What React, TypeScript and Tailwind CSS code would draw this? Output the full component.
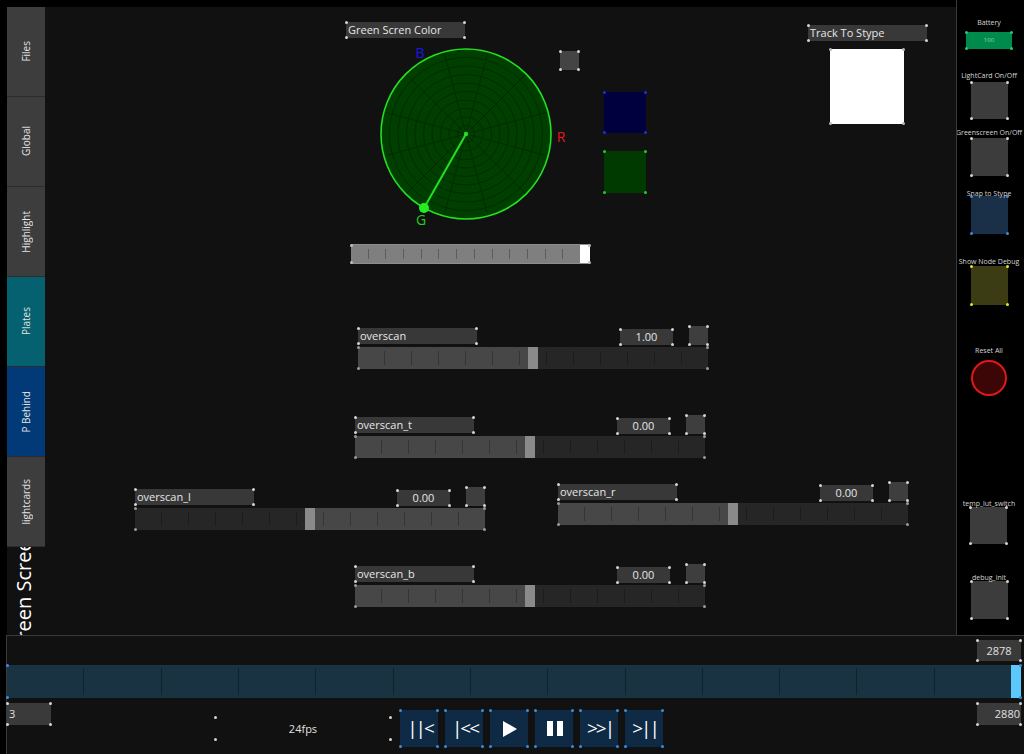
import React from "react";

const FONT = "font-['Open_Sans','DejaVu_Sans',sans-serif]";

/** Tiny corner markers that every control in the layout carries. */
function Dots({ c = "bg-[#d4d4d4]" }: { c?: string }) {
  const d = `absolute size-[3px] rounded-full ${c}`;
  return (
    <>
      <span className={`${d} -left-px -top-px`} />
      <span className={`${d} -right-px -top-px`} />
      <span className={`${d} -bottom-px -left-px`} />
      <span className={`${d} -bottom-px -right-px`} />
    </>
  );
}

function Ticks({ n = 13, line = "border-black/25", inset = "inset-y-[4px]" }: { n?: number; line?: string; inset?: string }) {
  return (
    <div className={`pointer-events-none absolute inset-x-0 flex ${inset}`}>
      {Array.from({ length: n }).map((_, i) => (
        <div key={i} className={`flex-1 ${i < n - 1 ? `border-r ${line}` : ""}`} />
      ))}
    </div>
  );
}

function Fader({
  label,
  value,
  invert,
  pos,
}: {
  label: string;
  value: string;
  invert?: boolean;
  pos: string;
}) {
  return (
    <div className={`absolute flex w-[350px] flex-col ${pos}`}>
      <div className="flex h-[19px] items-start">
        <div className="relative mt-[2px] h-[16px] w-[119px] bg-[#383838] pl-[2px] text-[11px] leading-[16px] text-[#e6e6e6]">
          {label}
          <Dots />
        </div>
        <div className="relative ml-auto mt-[3px] h-[16px] w-[53px] bg-[#383838] text-center text-[11px] leading-[16px] text-[#e6e6e6]">
          {value}
          <Dots />
        </div>
        <div className="relative ml-[16px] size-[19px] bg-[#3e3e3e]">
          <Dots />
        </div>
      </div>
      <div className="relative mt-[2px] flex h-[22px]">
        <div className={`w-[170px] ${invert ? "bg-[#262626]" : "bg-[#474747]"}`} />
        <div className="w-[10px] bg-[#8a8a8a]" />
        <div className={`flex-1 ${invert ? "bg-[#474747]" : "bg-[#262626]"}`} />
        <Ticks />
        <Dots c="bg-[#9a9a9a]" />
      </div>
    </div>
  );
}

function ColorWheel() {
  const cx = 466;
  const cy = 134;
  const r = 85;
  return (
    <svg className="absolute left-[363px] top-[33px] h-[200px] w-[212px]" viewBox="370 40 212 200">
      <circle cx={cx} cy={cy} r={r} fill="#003f00" />
      {Array.from({ length: 9 }).map((_, i) => (
        <circle key={i} cx={cx} cy={cy} r={8.5 * (i + 1)} fill="none" stroke="#002a00" strokeWidth={0.9} />
      ))}
      {Array.from({ length: 12 }).map((_, i) => {
        const a = ((15 + i * 30) * Math.PI) / 180;
        return (
          <line
            key={i}
            x1={cx}
            y1={cy}
            x2={cx + Math.sin(a) * r}
            y2={cy - Math.cos(a) * r}
            stroke="#002a00"
            strokeWidth={0.9}
          />
        );
      })}
      <circle cx={cx} cy={cy} r={r} fill="none" stroke="#22e022" strokeWidth={1.6} />
      <line x1={cx} y1={cy} x2={424} y2={208} stroke="#22e022" strokeWidth={2} />
      <circle cx={cx} cy={cy} r={2.2} fill="#22e022" />
      <circle cx={424} cy={208} r={5} fill="#22ee22" />
      <text x={420} y={58} fontSize={14} fill="#1818e8" textAnchor="middle" fontFamily="Open Sans, sans-serif">
        B
      </text>
      <text x={561} y={142} fontSize={14} fill="#e81818" textAnchor="middle" fontFamily="Open Sans, sans-serif">
        R
      </text>
      <text x={421} y={225} fontSize={14} fill="#22cc22" textAnchor="middle" fontFamily="Open Sans, sans-serif">
        G
      </text>
    </svg>
  );
}

const tabs = [
  { name: "Files", bg: "bg-[#3d3d3d]" },
  { name: "Global", bg: "bg-[#3d3d3d]" },
  { name: "Highlight", bg: "bg-[#3d3d3d]" },
  { name: "Plates", bg: "bg-[#05606f]" },
  { name: "P Behind", bg: "bg-[#023a78]" },
  { name: "lightcards", bg: "bg-[#3d3d3d]" },
];

function SideLabel({ children, className = "" }: { children: React.ReactNode; className?: string }) {
  return (
    <div className={`whitespace-nowrap text-center text-[7px] leading-[8px] text-[#d6d6d6] ${className}`}>{children}</div>
  );
}

function SideButton({ className = "", bg = "bg-[#3c3c3c]", dots }: { className?: string; bg?: string; dots?: string }) {
  return (
    <div className={`relative size-[37px] ${bg} ${className}`}>
      <Dots c={dots} />
    </div>
  );
}

function TransportButton({ children }: { children: React.ReactNode }) {
  return (
    <div className="relative flex h-[37px] w-[38px] items-center justify-center bg-[#0f2a44] text-[19px] leading-none tracking-[-2px] text-white">
      <span className="-mr-[2px]">{children}</span>
      <Dots c="bg-[#3a8ee0]" />
    </div>
  );
}

export default function App() {
  return (
    <div className={`flex h-[754px] w-[1024px] flex-col overflow-hidden bg-black ${FONT}`}>
      <div className="flex h-[635px]">
        {/* main page */}
        <div className="relative ml-[7px] mt-[7px] flex w-[949px] bg-[#111111]">
          <div className="flex w-[38px] flex-col">
            {tabs.map((t) => (
              <div
                key={t.name}
                className={`flex h-[90px] items-center justify-center border-b border-[#2c2c2c] ${t.bg}`}
              >
                <span className="rotate-180 whitespace-nowrap text-[10px] text-[#e4e4e4] [writing-mode:vertical-rl]">
                  {t.name}
                </span>
              </div>
            ))}
            <div className="flex flex-1 items-center justify-center overflow-hidden">
              <span className="rotate-180 whitespace-nowrap pl-[4px] text-[20px] leading-none text-white [writing-mode:vertical-rl]">
                Green Screen
              </span>
            </div>
          </div>

          {/* control canvas */}
          <div className="absolute left-[339px] top-[15px] h-[16px] w-[119px] bg-[#383838] pl-[2px] text-[11px] leading-[16px] text-[#e6e6e6]">
            Green Scren Color
            <Dots />
          </div>
          <ColorWheel />
          <div className="absolute left-[553px] top-[44px] size-[19px] bg-[#444444]">
            <Dots />
          </div>
          <div className="absolute left-[597px] top-[85px] h-[41px] w-[42px] bg-[#00003f]">
            <Dots c="bg-[#2a2ae0]" />
          </div>
          <div className="absolute left-[597px] top-[144px] h-[42px] w-[42px] bg-[#003a00]">
            <Dots c="bg-[#22cc22]" />
          </div>
          <div className="absolute left-[344px] top-[237px] flex h-[20px] w-[239px] border-y border-[#8e8e8e] bg-[#7f7f7f]">
            <div className="relative flex-1">
              <Ticks line="border-[#5c5c5c]" />
            </div>
            <div className="w-[10px] bg-white" />
            <Dots c="bg-[#bdbdbd]" />
          </div>

          <div className="absolute left-[801px] top-[18px] h-[16px] w-[119px] bg-[#383838] pl-[2px] text-[11px] leading-[16px] text-[#e6e6e6]">
            Track To Stype
            <Dots />
          </div>
          <div className="absolute left-[823px] top-[42px] h-[75px] w-[74px] bg-white">
            <Dots c="bg-[#bbbbbb]" />
          </div>

          <Fader label="overscan" value="1.00" pos="left-[351px] top-[319px]" />
          <Fader label="overscan_t" value="0.00" pos="left-[348px] top-[408px]" />
          <Fader label="overscan_l" value="0.00" invert pos="left-[128px] top-[480px]" />
          <Fader label="overscan_r" value="0.00" pos="left-[551px] top-[475px]" />
          <Fader label="overscan_b" value="0.00" pos="left-[348px] top-[557px]" />
        </div>

        {/* right control strip */}
        <div className="flex w-[68px] flex-col items-center overflow-hidden border-l border-[#3a3a3a] pr-[3px] pt-[19px]">
          <SideLabel>Battery</SideLabel>
          <div className="relative mt-[5px] h-[17px] w-[46px] bg-[#008a4c] text-center text-[6px] leading-[17px] text-[#8fdcae]">
            100
            <Dots c="bg-[#22cc66]" />
          </div>
          <SideLabel className="mt-[23px]">LightCard On/Off</SideLabel>
          <SideButton className="mt-[2px]" />
          <SideLabel className="mt-[10px]">Greenscreen On/Off</SideLabel>
          <SideButton className="mt-[1px] h-[38px]" />
          <SideLabel className="relative z-10 mt-[14px]">Snap to Stype</SideLabel>
          <SideButton className="-mt-[2px] h-[38px]" bg="bg-[#1a3048]" dots="bg-[#3a8ee0]" />
          <SideLabel className="mt-[24px]">Show Node Debug</SideLabel>
          <SideButton className="h-[39px]" bg="bg-[#3c3c14]" dots="bg-[#e6e622]" />
          <SideLabel className="mt-[42px]">Reset All</SideLabel>
          <div className="mt-[5px] size-[36px] rounded-full border-2 border-[#e01818] bg-[#3c0606]" />
          <SideLabel className="relative z-10 mt-[104px]">temp_lut_switch</SideLabel>
          <SideButton className="-mt-[1px] -translate-x-[1px]" />
          <SideLabel className="relative z-10 mt-[30px]">debug_init</SideLabel>
          <SideButton className="-mt-[1px] h-[38px]" />
        </div>
      </div>

      {/* timeline / transport */}
      <div className="ml-[6px] flex flex-1 flex-col border-l border-t border-[#3a3a3a] bg-[#111111] pr-[3px]">
        <div className="mt-[4px] flex justify-end">
          <div className="relative h-[21px] w-[44px] bg-[#3a3a3a] text-center text-[11px] leading-[21px] text-[#e0e0e0]">
            2878
            <Dots />
          </div>
        </div>
        <div className="relative mt-[4px] flex h-[33px] bg-[#1a3342]">
          <div className="relative flex-1">
            <Ticks line="border-[#10222d]" inset="inset-y-[3px]" />
          </div>
          <div className="w-[10px] bg-[#5ac8fa]" />
          <Dots c="bg-[#3a8ee0]" />
        </div>
        <div className="mt-[5px] flex items-start">
          <div className="relative h-[22px] w-[44px] bg-[#3a3a3a] pl-[2px] text-[11px] leading-[22px] text-[#e0e0e0]">
            3
            <Dots />
          </div>
          <div className="relative ml-[164px] mt-[14px] h-[23px] w-[176px] text-center text-[11px] leading-[23px] text-[#e0e0e0]">
            24fps
            <Dots />
          </div>
          <div className="ml-[9px] mt-[7px] flex gap-[7px]">
            <TransportButton>||&lt;</TransportButton>
            <TransportButton>|&lt;&lt;</TransportButton>
            <TransportButton>
              <svg width="16" height="18" viewBox="0 0 16 18">
                <path d="M1 1 L15 9 L1 17 Z" fill="white" />
              </svg>
            </TransportButton>
            <TransportButton>
              <div className="flex gap-[4px]">
                <div className="h-[15px] w-[6px] bg-white" />
                <div className="h-[15px] w-[6px] bg-white" />
              </div>
            </TransportButton>
            <TransportButton>&gt;&gt;|</TransportButton>
            <TransportButton>&gt;||</TransportButton>
          </div>
          <div className="relative ml-auto h-[22px] w-[44px] bg-[#3a3a3a] pr-[1px] text-right text-[11px] leading-[22px] text-[#e0e0e0]">
            2880
            <Dots />
          </div>
        </div>
      </div>
    </div>
  );
}
